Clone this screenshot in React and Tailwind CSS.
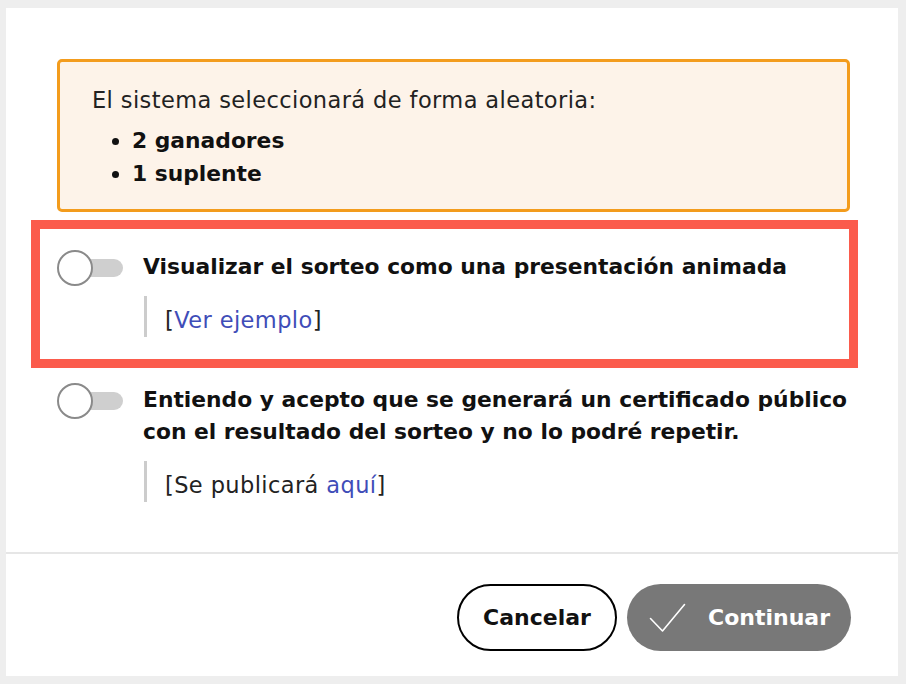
function Toggle() {
  return (
    <div className="relative w-[66px] h-[36px] flex-shrink-0">
      <div className="absolute left-[22px] right-0 top-[9px] h-[18px] rounded-full bg-[#cfcfcf]" />
      <div className="absolute left-0 top-0 w-[36px] h-[36px] rounded-full bg-white border-2 border-[#8a8a8a]" />
    </div>
  );
}

function Option({ title, children }) {
  return (
    <div className="flex items-start gap-[20px]">
      <Toggle />
      <div>
        <p className="font-bold text-[21.8px] leading-[32px] text-[#111] pt-[1px]">{title}</p>
        <div className="mt-[13px] ml-px border-l-[3px] border-[#cccccc] pl-[18px] pt-[10px] pb-[3px] text-[22.5px] tracking-[0.4px] leading-[28px] text-[#222]">
          {children}
        </div>
      </div>
    </div>
  );
}

export default function App() {
  return (
    <div className="w-[906px] h-[684px] bg-[#eeeeee] pt-[8px] pl-[6px] pr-[8px] pb-[8px]" style={{ fontFamily: '"DejaVu Sans", sans-serif' }}>
      <div className="bg-white h-full flex flex-col">
        <div className="pt-[51px] pl-[25px] pr-[40px]">
          <div className="ml-[26px] mr-[8px] border-[3px] border-[#f39c1d] rounded-[5px] bg-[#fdf3e9] pl-[32px] pt-[22px] pb-[19px]">
            <p className="text-[22.5px] tracking-[0.4px] leading-[32px] text-[#222]">El sistema seleccionará de forma aleatoria:</p>
            <ul className="list-disc pl-[40px] mt-[8px] font-bold text-[21.8px] leading-[33px] text-[#111]">
              <li>2 ganadores</li>
              <li>1 suplente</li>
            </ul>
          </div>
          <div className="mt-[8px] border-[9px] border-[#fb5b4c] pl-[17px] pt-[21px] pb-[22px]">
            <Option title="Visualizar el sorteo como una presentación animada">
              [<a className="text-[#3f4db8]">Ver ejemplo</a>]
            </Option>
          </div>
          <div className="pl-[26px] pt-[15px]">
            <Option
              title={<>Entiendo y acepto que se generará un certificado público<br />con el resultado del sorteo y no lo podré repetir.</>}
            >
              [Se publicará <a className="text-[#3f4db8]">aquí</a>]
            </Option>
          </div>
        </div>
        <div className="mt-auto border-t-2 border-[#e6e6e6] pt-[30px] pb-[25px] flex justify-end gap-[10px] pr-[47px]">
          <button className="h-[67px] w-[160px] rounded-full border-2 border-black bg-white font-bold text-[22px] text-[#111]">
            Cancelar
          </button>
          <button className="h-[67px] w-[224px] rounded-full bg-[#787878] text-white font-bold text-[22px] flex items-center pl-[22px] gap-[22px]">
            <svg width="37" height="30" viewBox="0 0 37 30" fill="none" stroke="currentColor" strokeWidth="1.6" strokeLinecap="round" strokeLinejoin="round">
              <path d="M1.5 15.5 L13.5 28 L35.5 1.5" />
            </svg>
            Continuar
          </button>
        </div>
      </div>
    </div>
  );
}
